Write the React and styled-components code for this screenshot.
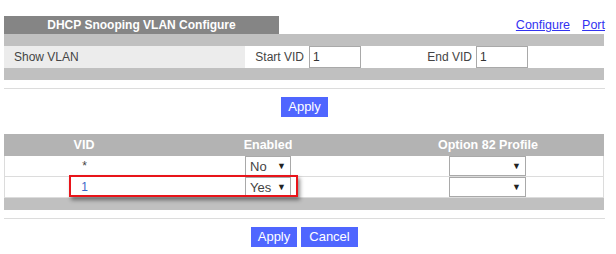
import React from "react";
import styled, { createGlobalStyle } from "styled-components";

const Global = createGlobalStyle`
  html, body { margin: 0; padding: 0; background: #fff; }
  body { font-family: "Liberation Sans", Arial, sans-serif; font-size: 12px; color: #444; }
`;

const Page = styled.div`
  width: 601px;
  padding: 16px 0 0 4px;
`;

const TopBar = styled.div`
  display: flex;
  justify-content: space-between;
  align-items: flex-end;
  height: 18px;
`;

const Title = styled.div`
  width: 275px;
  height: 18px;
  background: #858585;
  color: #fff;
  font-weight: bold;
  font-size: 12px;
  line-height: 18px;
  text-align: center;
`;

const Links = styled.div`
  display: flex;
  gap: 12px;
  padding-bottom: 2px;
`;

const Link = styled.a`
  color: #3232f0;
  text-decoration: underline;
  font-size: 12.5px;
  cursor: pointer;
`;

const Band = styled.div`
  height: 12px;
  background: #c0c0c0;
  width: 600px;
`;

const FilterRow = styled.div`
  display: flex;
  height: 22px;
  width: 600px;
  background: #fff;
`;

const LabelCell = styled.div`
  width: 231px;
  padding-left: 10px;
  background: #ececec;
  line-height: 22px;
  color: #444;
`;

const FieldCell = styled.div`
  width: ${(p) => p.$w}px;
  display: flex;
  justify-content: flex-end;
  align-items: center;
  gap: ${(p) => p.$gap}px;
`;

const Filler = styled.div`
  flex: 1;
`;

const TextInput = styled.div`
  box-sizing: border-box;
  width: 52px;
  height: 22px;
  border: 1px solid #a9a9a9;
  padding-left: 3px;
  line-height: 20px;
  color: #333;
  background: #fff;
`;

const Rule = styled.div`
  height: 1px;
  background: #dcdcdc;
  width: 601px;
  margin-top: ${(p) => p.$top}px;
`;

const ButtonRow = styled.div`
  display: flex;
  justify-content: center;
  gap: 4px;
  margin-top: ${(p) => p.$top}px;
`;

const Button = styled.button`
  box-sizing: border-box;
  height: 20px;
  width: ${(p) => p.$w}px;
  padding: 0;
  border: none;
  background: #4f66ff;
  color: #fff;
  font-family: "Liberation Sans", Arial, sans-serif;
  font-size: 13px;
  line-height: 20px;
  cursor: pointer;
`;

const TableWrap = styled.div`
  position: relative;
  width: 600px;
  margin-top: 17px;
`;

const Grid = styled.div`
  display: grid;
  grid-template-columns: 160px 208px 232px;
`;

const Head = styled.div`
  height: 22px;
  line-height: 22px;
  background: #b3b3b3;
  color: #fff;
  font-weight: bold;
  font-size: 12.5px;
  text-align: center;
`;

const Cell = styled.div`
  box-sizing: border-box;
  height: 21px;
  display: flex;
  align-items: center;
  justify-content: center;
  border-bottom: 1px solid #dcdcdc;
  border-left: ${(p) => (p.$first ? "1px solid #dcdcdc" : "none")};
  border-right: ${(p) => (p.$last ? "1px solid #dcdcdc" : "none")};
  color: ${(p) => p.$color || "#444"};
  background: #fff;
`;

const Select = styled.div`
  box-sizing: border-box;
  width: ${(p) => p.$w}px;
  height: 20px;
  border: 1px solid #a9a9a9;
  display: flex;
  align-items: center;
  justify-content: space-between;
  padding: 0 4px 0 4px;
  color: #444;
  font-size: 13px;
  background: #fff;
`;

const Arrow = styled.span`
  font-size: 9px;
  color: #222;
`;

const Highlight = styled.div`
  position: absolute;
  left: 65px;
  top: 41px;
  width: 229px;
  height: 22px;
  box-sizing: border-box;
  border: 2px solid #e8141a;
  box-shadow: 2px 3px 4px rgba(0, 0, 0, 0.45);
  pointer-events: none;
`;

const FakeSelect = ({ w, value }) => (
  <Select $w={w}>
    <span>{value}</span>
    <Arrow>▼</Arrow>
  </Select>
);

export default function App() {
  return (
    <>
      <Global />
      <Page>
        <TopBar>
          <Title>DHCP Snooping VLAN Configure</Title>
          <Links>
            <Link>Configure</Link>
            <Link>Port</Link>
          </Links>
        </TopBar>
        <Band />
        <FilterRow>
          <LabelCell>Show VLAN</LabelCell>
          <FieldCell $w={116} $gap={5}>
            <span>Start VID</span>
            <TextInput>1</TextInput>
          </FieldCell>
          <FieldCell $w={167} $gap={4}>
            <span>End VID</span>
            <TextInput>1</TextInput>
          </FieldCell>
          <Filler />
        </FilterRow>
        <Band />
        <Rule $top={8} />
        <ButtonRow $top={8}>
          <Button $w={47}>Apply</Button>
        </ButtonRow>
        <TableWrap>
          <Grid>
            <Head>VID</Head>
            <Head>Enabled</Head>
            <Head>Option 82 Profile</Head>
            <Cell $first>*</Cell>
            <Cell>
              <FakeSelect w={46} value="No" />
            </Cell>
            <Cell $last>
              <FakeSelect w={77} value="" />
            </Cell>
            <Cell $first $color="#3a66c8">1</Cell>
            <Cell>
              <FakeSelect w={46} value="Yes" />
            </Cell>
            <Cell $last>
              <FakeSelect w={77} value="" />
            </Cell>
          </Grid>
          <Band />
          <Highlight />
        </TableWrap>
        <Rule $top={8} />
        <ButtonRow $top={8}>
          <Button $w={46}>Apply</Button>
          <Button $w={57}>Cancel</Button>
        </ButtonRow>
      </Page>
    </>
  );
}
